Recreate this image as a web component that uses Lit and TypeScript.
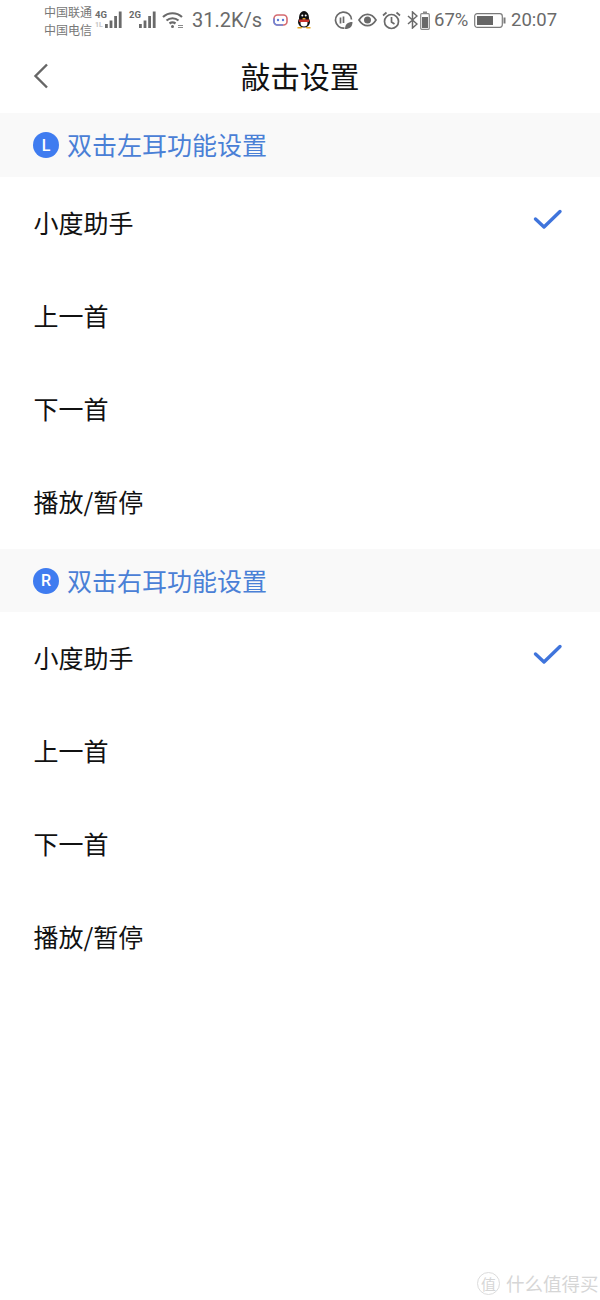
import { LitElement, html, css, svg } from "lit";
import { customElement } from "lit/decorators.js";

const OPTIONS = ["小度助手", "上一首", "下一首", "播放/暂停"];

const bars = svg`<rect x="0" y="13" width="2.8" height="4"/><rect x="4.600" y="9.500" width="2.8" height="7.500"/><rect x="9.200" y="5" width="2.8" height="12"/><rect x="13.800" y="0.500" width="2.8" height="16.500"/>`;

@customElement("app-root")
export class AppRoot extends LitElement {
  static styles = css`
    :host {
      display: block;
      width: 600px;
      height: 1300px;
      background: #fff;
      position: relative;
      overflow: hidden;
      font-family: "Noto Sans CJK SC", "Liberation Sans", sans-serif;
      color: #111;
    }
    .status {
      height: 40px;
      display: flex;
      align-items: center;
      padding-left: 44px;
      color: #6a6a6a;
      font-family: Roboto, "Noto Sans CJK SC", sans-serif;
      font-size: 18.500px;
    }
    .status svg { display: block; flex: none; }
    .carriers {
      display: flex;
      flex-direction: column;
      font-size: 12px;
      line-height: 18px;
      width: 50px;
      font-family: "Noto Sans CJK SC", sans-serif;
      margin-top: 1px;
      color: #777;
    }
    .net { display: flex; align-items: center; width: 34px; height: 24px; }
    .speed { margin-left: 8px; width: 71px; white-space: nowrap; font-size: 20px; }
    .nav {
      height: 73px;
      display: grid;
      grid-template-columns: 1fr auto 1fr;
      align-items: center;
    }
    .back { padding-left: 33px; display: flex; }
    .back svg { margin-top: -2px; }
    .title { font-size: 29.700px; line-height: 40px; margin: -1px 0 0 0; color: #111; }
    .section {
      height: 64px;
      background: #f9f9f9;
      display: flex;
      align-items: center;
      gap: 8px;
      padding-left: 33px;
      color: #4a80d6;
      font-size: 25px;
    }
    .section.r { height: 63px; }
    .section .label { margin-top: -2px; }
    .badge {
      width: 26px;
      height: 26px;
      border-radius: 50%;
      background: #3f7cf0;
      color: #fff;
      font-family: Roboto, sans-serif;
      font-weight: 500;
      font-size: 16px;
      display: flex;
      align-items: center;
      justify-content: center;
    }
    .row {
      height: 93px;
      display: flex;
      align-items: center;
      justify-content: space-between;
      padding: 0 37px 0 33.500px;
      font-size: 25px;
      color: #111;
    }
    .row .label { margin-top: -3px; }
    .row svg { margin-top: -10px; }
    .mark {
      position: absolute;
      right: 0;
      bottom: 0;
      width: 123px;
      height: 34px;
      display: flex;
      align-items: center;
      gap: 6px;
      color: #d6d6d6;
      font-size: 18.500px;
      white-space: nowrap;
    }
    .seal {
      width: 23px;
      height: 23px;
      border: 1.500px solid #dcdcdc;
      border-radius: 50%;
      font-size: 15px;
      display: flex;
      align-items: center;
      justify-content: center;
      flex: none;
      box-sizing: border-box;
    }
  `;

  private statusBar() {
    return html`<div class="status">
      <div class="carriers"><span>中国联通</span><span>中国电信</span></div>
      <div class="net">
        <svg width="30" height="22" viewBox="0 0 30 22" fill="#6a6a6a">
          <text x="1" y="9" font-size="9.500" font-weight="700" font-family="Roboto">4G</text>
          <text x="1" y="18" font-size="7" font-weight="700" font-family="Roboto" fill="#c4c4c4">1L</text>
          <g transform="translate(11 2)">${bars}</g>
        </svg>
      </div>
      <div class="net">
        <svg width="30" height="22" viewBox="0 0 30 22" fill="#6a6a6a">
          <text x="1" y="9" font-size="9.500" font-weight="700" font-family="Roboto">2G</text>
          <g transform="translate(11 2)">${bars}</g>
        </svg>
      </div>
      <svg width="22" height="18" viewBox="0 0 22 18" fill="none" stroke="#6a6a6a" stroke-width="2.200">
        <path d="M1 6c5.500-5 13.500-5 19 0"/><path d="M4.500 9.500c3.500-3 8.500-3 12 0"/><path d="M7.500 12.500c2-1.500 4-1.500 6 0"/>
        <circle cx="10.500" cy="15.500" r="1.500" fill="#6a6a6a" stroke="none"/>
        <path d="M16 14.500h5M16 16.500h5" stroke-width="1.200" stroke="#8a8a8a"/>
      </svg>
      <span class="speed">31.2K/s</span>
      <svg style="margin-left:10px" width="15" height="12" viewBox="0 0 15 12">
        <rect x="1" y="1" width="13" height="10" rx="3.500" fill="#fff" stroke="#d56a70" stroke-width="1.600"/>
        <path d="M1 4.500v3a3.500 3.500 0 0 0 3.500 3.500H10" fill="none" stroke="#6a86dc" stroke-width="1.600"/>
        <circle cx="5" cy="6" r="1.200" fill="#5a78d8"/><circle cx="10" cy="6" r="1.200" fill="#5a78d8"/>
      </svg>
      <svg style="margin-left:8px" width="16" height="18" viewBox="0 0 16 18">
        <ellipse cx="8" cy="6.500" rx="5" ry="6.500" fill="#111"/>
        <ellipse cx="8" cy="11" rx="6" ry="5.500" fill="#111"/>
        <ellipse cx="8" cy="12" rx="3.500" ry="3.500" fill="#fff"/>
        <path d="M3 8.500h10v2.500H3z" fill="#c8322a"/>
        <path d="M1.500 16h5l-1 1.500h-4zM9.500 16h5v1.500h-4z" fill="#e9a820"/>
        <circle cx="6.300" cy="4.500" r="1" fill="#fff"/><circle cx="9.700" cy="4.500" r="1" fill="#fff"/>
        <path d="M6 7h4l-2 1.500z" fill="#e9a820"/>
      </svg>
      <svg style="margin-left:22px" width="19" height="19" viewBox="0 0 19 19" fill="none" stroke="#6a6a6a" stroke-width="1.700">
        <path d="M10.500 17A8 8 0 1 1 17.500 8.500"/>
        <path d="M6.500 6.500v6M9.500 12V5.500"/>
        <path d="M11 18c0-4.500 2.500-7 7.500-7 0 4.500-2.500 7-7.500 7z" fill="#6a6a6a" stroke="none"/>
      </svg>
      <svg style="margin-left:5px" width="19" height="14" viewBox="0 0 19 14" fill="none" stroke="#6a6a6a" stroke-width="1.700">
        <path d="M1 7c4.500-7.500 12.500-7.500 17 0-4.500 7.500-12.500 7.500-17 0z"/>
        <circle cx="9.500" cy="7" r="3.500" fill="#6a6a6a" stroke="none"/>
      </svg>
      <svg style="margin-left:5px" width="19" height="19" viewBox="0 0 19 19" fill="none" stroke="#6a6a6a" stroke-width="1.700">
        <circle cx="9.500" cy="10.500" r="7"/><path d="M9.500 6v5l3 2"/><path d="M1 4.500l3.500-3M18 4.500l-3.500-3"/>
      </svg>
      <svg style="margin-left:6px" width="11" height="18" viewBox="0 0 11 18" fill="none" stroke="#6a6a6a" stroke-width="1.500">
        <path d="M1 5l9 8-4.500 4V1L10 5l-9 8"/>
      </svg>
      <svg style="margin-left:2px" width="10" height="19" viewBox="0 0 10 19">
        <rect x="0.700" y="2.700" width="8.600" height="15.600" rx="1" fill="none" stroke="#8a8a8a" stroke-width="1.200"/>
        <rect x="3" y="0.500" width="4" height="2" fill="#8a8a8a"/>
        <rect x="2" y="6" width="6" height="11" fill="#6a6a6a"/>
      </svg>
      <span style="margin-left:4px;width:40px">67%</span>
      <svg width="32" height="15" viewBox="0 0 32 15">
        <rect x="0.700" y="0.700" width="27.600" height="13.600" rx="2.500" fill="none" stroke="#7a7a7a" stroke-width="1.200"/>
        <rect x="3" y="3" width="16" height="9" fill="#666"/>
        <rect x="29.500" y="4.500" width="2" height="6" fill="#7a7a7a"/>
      </svg>
      <span style="margin-left:5px">20:07</span>
    </div>`;
  }

  private section(letter: string, title: string, cls: string) {
    return html`<div class="section ${cls}">
        <span class="badge">${letter}</span><span class="label">${title}</span>
      </div>
      ${OPTIONS.map(
        (o, i) => html`<div class="row">
          <span class="label">${o}</span>
          ${i === 0
            ? html`<svg width="30" height="22" viewBox="0 0 30 22" fill="none" stroke="#3f74dc" stroke-width="3.400" stroke-linecap="round" stroke-linejoin="round">
                <path d="M2.500 11l8.500 8L27 3.500"/>
              </svg>`
            : ""}
        </div>`
      )}`;
  }

  render() {
    return html`
      ${this.statusBar()}
      <div class="nav">
        <div class="back">
          <svg width="16" height="26" viewBox="0 0 16 26" fill="none" stroke="#666" stroke-width="2.400">
            <path d="M14 1.500L2.500 13 14 24.500"/>
          </svg>
        </div>
        <div class="title">敲击设置</div>
        <div></div>
      </div>
      ${this.section("L", "双击左耳功能设置", "l")}
      ${this.section("R", "双击右耳功能设置", "r")}
      <div class="mark"><span class="seal">值</span><span>什么值得买</span></div>
    `;
  }
}
